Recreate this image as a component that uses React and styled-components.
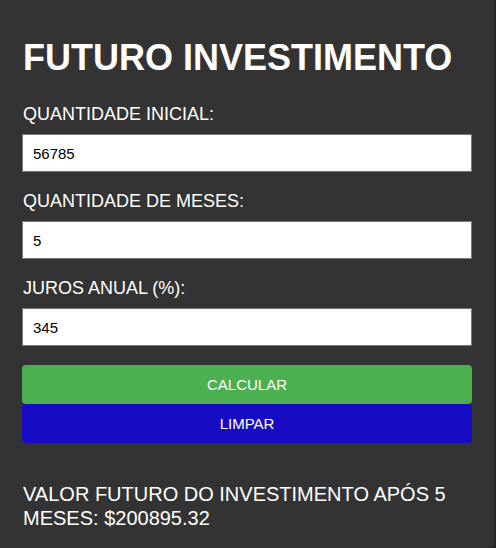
import React, { useState } from 'react';
import styled, { createGlobalStyle } from 'styled-components';

const GlobalStyle = createGlobalStyle`
  html, body {
    margin: 0;
    padding: 0;
    background: #262626;
    font-family: 'Liberation Sans', Arial, sans-serif;
  }
`;

const Container = styled.div`
  width: 494px;
  min-height: 548px;
  box-sizing: border-box;
  background: #333333;
  border-radius: 0 0 6px 0;
  padding: 37px 22px 0 22px;
  color: #ffffff;
`;

const Title = styled.h1`
  margin: 0 0 25px 1px;
  font-size: 36px;
  line-height: 42px;
  font-weight: bold;
  color: #ffffff;
`;

const Field = styled.div`
  display: flex;
  flex-direction: column;
  margin-bottom: 19px;
`;

const Label = styled.label`
  font-size: 18px;
  line-height: 21px;
  margin: 0 0 9px 1px;
  color: #ffffff;
`;

const Input = styled.input`
  width: 100%;
  height: 38px;
  box-sizing: border-box;
  padding: 0 10px;
  border: 1px solid #767676;
  background: #ffffff;
  color: #000000;
  font-family: 'Liberation Sans', Arial, sans-serif;
  font-size: 15px;
  outline: none;
`;

const Buttons = styled.div`
  display: flex;
  flex-direction: column;
`;

const Button = styled.button`
  width: 100%;
  height: 39px;
  border: none;
  border-radius: 4px;
  background: ${(p) => p.$color};
  color: #ffffff;
  font-family: 'Liberation Sans', Arial, sans-serif;
  font-size: 15px;
  cursor: pointer;
`;

const Result = styled.p`
  margin: 39px 0 0 1px;
  font-size: 20px;
  line-height: 24px;
  color: #ffffff;
`;

export default function App() {
  const [inicial, setInicial] = useState('56785');
  const [meses, setMeses] = useState('5');
  const [juros, setJuros] = useState('345');

  return (
    <>
      <GlobalStyle />
      <Container>
        <Title>FUTURO INVESTIMENTO</Title>
        <Field>
          <Label>QUANTIDADE INICIAL:</Label>
          <Input value={inicial} onChange={(e) => setInicial(e.target.value)} />
        </Field>
        <Field>
          <Label>QUANTIDADE DE MESES:</Label>
          <Input value={meses} onChange={(e) => setMeses(e.target.value)} />
        </Field>
        <Field>
          <Label>JUROS ANUAL (%):</Label>
          <Input value={juros} onChange={(e) => setJuros(e.target.value)} />
        </Field>
        <Buttons>
          <Button $color="#4caf50">CALCULAR</Button>
          <Button $color="#170cc4">LIMPAR</Button>
        </Buttons>
        <Result>VALOR FUTURO DO INVESTIMENTO APÓS 5 MESES: $200895.32</Result>
      </Container>
    </>
  );
}
